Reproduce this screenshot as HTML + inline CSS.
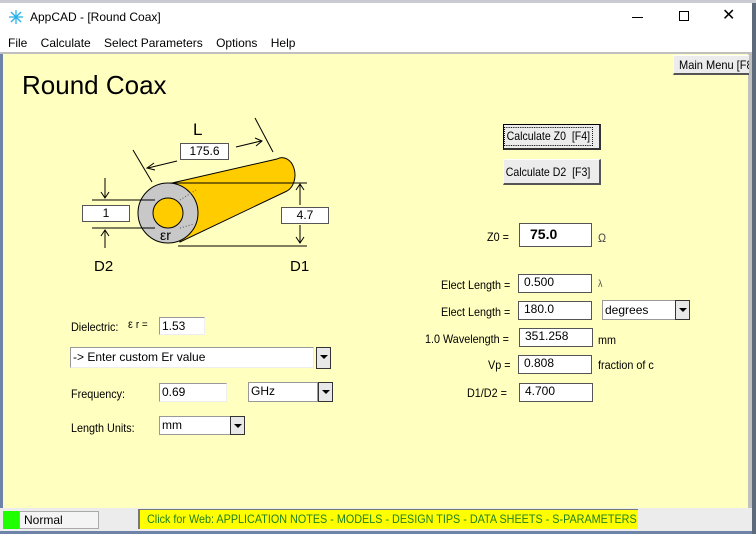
<!DOCTYPE html>
<html><head><meta charset="utf-8"><style>
*{margin:0;padding:0;box-sizing:border-box}
body{width:756px;height:534px;overflow:hidden;background:#7a8aa0;font-family:"Liberation Sans",sans-serif;position:relative}
.a{position:absolute}
.t{position:absolute;font-size:12px;color:#000;white-space:nowrap;transform:scaleX(.9);transform-origin:left top}
.box{position:absolute;background:#fff;border:1px solid #555;font-size:12px;line-height:14px;padding-left:5px;white-space:nowrap}
.in{position:absolute;background:#fff;border-top:1px solid #999;border-left:1px solid #999;border-right:1px solid #eee;border-bottom:1px solid #eee;font-size:12px;padding-left:2px;white-space:nowrap}
.dd{position:absolute;width:15px;background:#e8e8e8;border:1px solid #333;}
.dd:after{content:"";position:absolute;left:3px;top:7px;border-left:4px solid transparent;border-right:4px solid transparent;border-top:4px solid #000}
.btn{position:absolute;background:#ececec;border:1px solid #fff;border-right:2px solid #555;border-bottom:2px solid #555;font-size:12px;text-align:center;white-space:nowrap;overflow:hidden}
</style></head><body>
<div class="a" style="left:0;top:0;width:756px;height:4px;background:#c8ccd2"></div>
<div class="a" style="left:0;top:3px;width:752px;height:531px;background:#fff"></div>
<div class="a" style="left:752px;top:3px;width:4px;height:531px;background:#5d6a7c"></div>
<svg class="a" style="left:9px;top:10px" width="14" height="14" viewBox="0 0 14 14"><g stroke="#2ab0e8" stroke-width="1.3"><line x1="7" y1="0" x2="7" y2="14"/><line x1="0" y1="7" x2="14" y2="7"/><line x1="2" y1="2" x2="12" y2="12"/><line x1="12" y1="2" x2="2" y2="12"/></g></svg>
<div class="a" style="left:30px;top:10px;font-size:12px">AppCAD - [Round Coax]</div>
<div class="a" style="left:632px;top:17px;width:11px;height:1px;background:#000"></div>
<div class="a" style="left:679px;top:11px;width:10px;height:10px;border:1px solid #000"></div>
<div class="a" style="left:722px;top:7px;font-size:16px;line-height:18px">✕</div>
<div class="a" style="left:8px;top:36px;font-size:12px;word-spacing:0">File&nbsp;&nbsp;&nbsp;&nbsp;Calculate&nbsp;&nbsp;&nbsp;&nbsp;Select Parameters&nbsp;&nbsp;&nbsp;&nbsp;Options&nbsp;&nbsp;&nbsp;&nbsp;Help</div>
<div class="a" style="left:0;top:52px;width:752px;height:2px;background:#c0c0c0"></div>
<div class="a" style="left:0;top:54px;width:3px;height:454px;background:#6d84a8"></div>
<div class="a" style="left:3px;top:54px;width:745px;height:454px;background:#ffffc0"></div>
<div class="a" style="left:748px;top:54px;width:4px;height:454px;background:#c0c0c0"></div>
<div class="btn" style="left:673px;top:55px;width:76px;height:20px;line-height:18px;text-align:left;padding-left:5px;border-right:none"><span style="display:inline-block;transform:scaleX(.92);transform-origin:left">Main Menu [F8</span></div>
<div class="a" style="left:22px;top:70px;font-size:26px">Round Coax</div>

<svg class="a" style="left:0;top:0" width="756" height="534">
<path d="M172,183 L277,159 A12,16 0 0 1 287,191 L180,242 Z" fill="#ffcc00" stroke="#000" stroke-width="1"/>
<circle cx="168" cy="213" r="30" fill="#c8c8c8" stroke="#000"/>
<circle cx="168" cy="213" r="15" fill="#ffcc00" stroke="#000"/>
<path d="M180,200 L196,190 M180,228 L194,224" stroke="#555" stroke-dasharray="1,2"/>
<g stroke="#000" stroke-width="1" fill="none">
<line x1="170" y1="183" x2="307" y2="183"/><line x1="178" y1="246" x2="307" y2="246"/>
<line x1="300" y1="185" x2="300" y2="205"/><path d="M296,190 L300,184 L304,190"/>
<line x1="300" y1="225" x2="300" y2="243"/><path d="M296,237 L300,243 L304,237"/>
<line x1="92" y1="200" x2="155" y2="200"/><line x1="92" y1="228" x2="155" y2="228"/>
<line x1="105" y1="178" x2="105" y2="198"/><path d="M101,192 L105,198 L109,192"/>
<line x1="105" y1="230" x2="105" y2="248"/><path d="M101,236 L105,230 L109,236"/>
<line x1="133" y1="150" x2="152" y2="182"/><line x1="255" y1="118" x2="273" y2="152"/>
<line x1="177" y1="161" x2="148" y2="168"/><path d="M154,163 L147,168 L155,170"/>
<line x1="236" y1="147" x2="261" y2="141"/><path d="M255,138 L262,141 L256,146"/>
</g>
<text x="160" y="240" font-size="14" font-family="Liberation Sans">εr</text>
</svg>
<div class="a" style="left:193px;top:120px;font-size:17px">L</div>
<div class="box" style="left:180px;top:143px;width:49px;height:17px;padding:0;text-align:center">175.6</div>
<div class="box" style="left:82px;top:205px;width:48px;height:17px;padding:0;text-align:center">1</div>
<div class="box" style="left:281px;top:207px;width:48px;height:17px;padding:0;text-align:center">4.7</div>
<div class="a" style="left:94px;top:258px;font-size:15px">D2</div>
<div class="a" style="left:290px;top:258px;font-size:15px">D1</div>

<div class="btn" style="left:503px;top:124px;width:98px;height:26px;line-height:22px;border:1px solid #000;border-right:2px solid #333;border-bottom:2px solid #333"><span style="border:1px dotted #000;padding:1px 2px;display:inline-block;transform:scaleX(.88);line-height:15px;margin-left:-6px">Calculate Z0&nbsp; [F4]</span></div>
<div class="btn" style="left:503px;top:159px;width:98px;height:26px;line-height:24px"><span style="display:inline-block;transform:scaleX(.88);margin-left:-6px">Calculate D2&nbsp; [F3]</span></div>

<div class="t" style="left:487px;top:230px">Z0 =</div>
<div class="box" style="left:519px;top:223px;width:73px;height:24px;font-weight:bold;font-size:14px;line-height:20px;padding-left:10px">75.0</div>
<div class="t" style="left:598px;top:231px;color:#444">Ω</div>

<div class="t" style="left:441px;top:278px">Elect Length =</div>
<div class="box" style="left:518px;top:274px;width:74px;height:19px">0.500</div>
<div class="t" style="left:598px;top:279px;color:#555;font-size:10px">λ</div>
<div class="t" style="left:441px;top:305px">Elect Length =</div>
<div class="box" style="left:518px;top:301px;width:74px;height:19px">180.0</div>
<div class="in" style="left:602px;top:300px;width:74px;height:20px;line-height:18px;border:1px solid #999">degrees</div>
<div class="dd" style="left:675px;top:300px;height:20px"></div>
<div class="t" style="left:425px;top:332px">1.0 Wavelength =</div>
<div class="box" style="left:519px;top:328px;width:74px;height:19px">351.258</div>
<div class="t" style="left:598px;top:333px">mm</div>
<div class="t" style="left:488px;top:358px">Vp =</div>
<div class="box" style="left:518px;top:355px;width:74px;height:19px">0.808</div>
<div class="t" style="left:598px;top:358px">fraction of c</div>
<div class="t" style="left:467px;top:386px">D1/D2 =</div>
<div class="box" style="left:519px;top:383px;width:74px;height:19px">4.700</div>

<div class="t" style="left:71px;top:320px">Dielectric:</div>
<div class="t" style="left:128px;top:317px">ε <span style="font-size:11px">r =</span></div>
<div class="in" style="left:159px;top:317px;width:46px;height:18px;line-height:16px">1.53</div>
<div class="in" style="left:70px;top:347px;width:244px;height:21px;line-height:18px">-&gt; Enter custom Er value</div>
<div class="dd" style="left:316px;top:347px;height:22px"></div>
<div class="t" style="left:71px;top:387px">Frequency:</div>
<div class="in" style="left:159px;top:383px;width:68px;height:19px;line-height:17px">0.69</div>
<div class="in" style="left:248px;top:382px;width:70px;height:20px;line-height:17px;border:1px solid #999">GHz</div>
<div class="dd" style="left:318px;top:382px;height:20px"></div>
<div class="t" style="left:71px;top:421px">Length Units:</div>
<div class="in" style="left:159px;top:416px;width:72px;height:19px;line-height:17px;border:1px solid #999">mm</div>
<div class="dd" style="left:230px;top:416px;height:19px"></div>

<div class="a" style="left:0;top:508px;width:752px;height:23px;background:#ececec"></div>
<div class="a" style="left:3px;top:511px;width:16px;height:18px;background:#20ff00"></div>
<div class="a" style="left:19px;top:511px;width:80px;height:18px;border:1px solid #aaa;font-size:12px;padding-left:4px;line-height:17px;background:#f4f4f4">Normal</div>
<div class="a" style="left:138px;top:509px;width:500px;height:20px;background:#ffff00;border-left:2px solid #777;border-top:1px solid #777;font-size:12px;color:#208020;line-height:18px;padding-left:7px;white-space:nowrap;overflow:hidden"><span style="display:inline-block;transform:scaleX(.9);transform-origin:left">Click for Web: APPLICATION NOTES - MODELS - DESIGN TIPS - DATA SHEETS - S-PARAMETERS</span></div>
<div class="a" style="left:0;top:531px;width:752px;height:3px;background:#6d84a8"></div>
</body></html>
